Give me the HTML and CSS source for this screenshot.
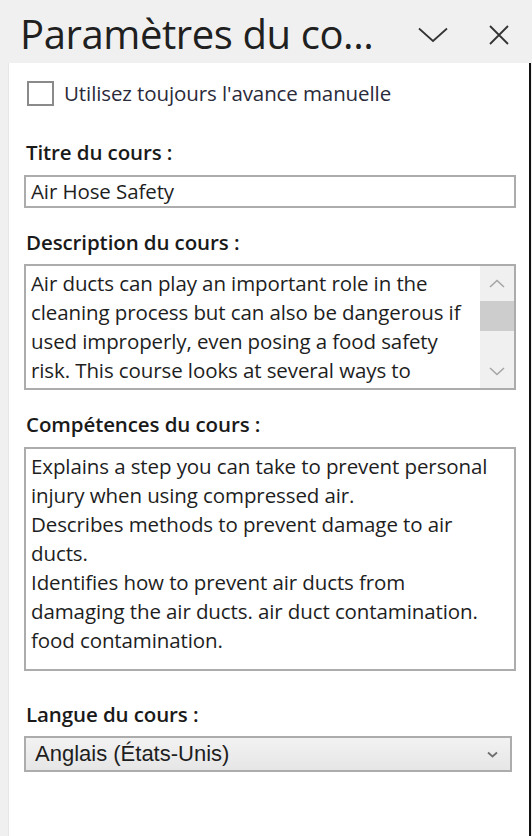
FILE: index.html
```html
<!DOCTYPE html>
<html lang="fr">
<head>
<meta charset="utf-8">
<title>Paramètres du cours</title>
<link rel="stylesheet" href="styles.css">
</head>
<body>
<div class="window">
  <header class="titlebar">
    <h1 class="title">Paramètres du co...</h1>
    <div class="controls">
      <svg class="ctl ctl-chevron" width="30" height="16" viewBox="0 0 30 16"><path d="M1 1.5 L15 14 L29 1.5" fill="none" stroke="#333" stroke-width="1.7"/></svg>
      <svg class="ctl ctl-close" width="20" height="20" viewBox="0 0 20 20"><path d="M1 1 L19 19 M19 1 L1 19" fill="none" stroke="#333" stroke-width="1.8"/></svg>
    </div>
  </header>
  <main class="panel">
    <label class="check-row">
      <span class="checkbox"></span>
      <span class="check-label">Utilisez toujours l'avance manuelle</span>
    </label>

    <div class="field field-title">
      <div class="field-label">Titre du cours :</div>
      <div class="input">Air Hose Safety</div>
    </div>

    <div class="field field-desc">
      <div class="field-label">Description du cours :</div>
      <div class="textarea textarea-desc">
        <div class="textarea-text">Air ducts can play an important role in the cleaning process but can also be dangerous if used improperly, even posing a food safety risk. This course looks at several ways to</div>
        <div class="scrollbar">
          <div class="sb-btn"><svg width="16" height="9" viewBox="0 0 16 9"><path d="M1 8 L8 1.5 L15 8" fill="none" stroke="#a6a6a6" stroke-width="1.6"/></svg></div>
          <div class="sb-thumb"></div>
          <div class="sb-track"></div>
          <div class="sb-btn sb-btn-down"><svg width="16" height="9" viewBox="0 0 16 9"><path d="M1 1 L8 7.5 L15 1" fill="none" stroke="#a6a6a6" stroke-width="1.6"/></svg></div>
        </div>
      </div>
    </div>

    <div class="field field-skills">
      <div class="field-label">Compétences du cours :</div>
      <div class="textarea textarea-skills">
        <div class="textarea-text textarea-text-wide">Explains a step you can take to prevent personal injury when using compressed air.<br>Describes methods to prevent damage to air ducts.<br>Identifies how to prevent air ducts from damaging the air ducts. air duct contamination. food contamination.</div>
      </div>
    </div>

    <div class="field field-lang">
      <div class="field-label">Langue du cours :</div>
      <div class="select">
        <span class="select-value">Anglais (États-Unis)</span>
        <svg class="select-arrow" width="11" height="7" viewBox="0 0 11 7"><path d="M1 1.5 L5.5 5.5 L10 1.5" fill="none" stroke="#707070" stroke-width="1.8"/></svg>
      </div>
    </div>
  </main>
</div>
</body>
</html>
```

FILE: styles.css
```css
* { box-sizing: border-box; }

html, body {
  margin: 0;
  padding: 0;
  height: 100%;
  background: #f0f0f0;
}

body {
  font-family: "Open Sans", "Noto Sans", sans-serif;
  color: #1e1e1e;
  overflow: hidden;
}

.window {
  display: flex;
  flex-direction: column;
  height: 836px;
  width: 532px;
}

.titlebar {
  height: 63px;
  display: flex;
  align-items: center;
  padding-left: 20px;
  flex: none;
}

.title {
  margin: 0;
  font-weight: 400;
  font-size: 40px;
  line-height: 63px;
  color: #202020;
  white-space: nowrap;
  letter-spacing: -0.4px;
  flex: 1;
  padding-top: 3px;
}

.controls {
  display: flex;
  align-items: center;
  padding-right: 23px;
  gap: 41px;
  padding-top: 6px;
}

.ctl-chevron { width: 30px; height: 16px; }
.ctl-close { width: 20px; height: 20px; }

.panel {
  flex: 1;
  margin-left: 8px;
  margin-right: 1px;
  background: #fff;
  border-right: 2px solid #111;
  border-left: 1px solid #e6e6e6;
  padding: 18px 13px 0 15px;
  display: flex;
  flex-direction: column;
}

.check-row {
  display: flex;
  align-items: center;
  gap: 10px;
  margin-left: 3px;
  height: 25px;
}

.checkbox {
  width: 27px;
  height: 25px;
  border: 2px solid #8a8a8a;
  background: #fff;
  flex: none;
}

.check-label {
  font-size: 20.5px;
  line-height: 25px;
  color: #2a2a3a;
  letter-spacing: -0.1px;
}

.field-label {
  font-size: 20.5px;
  font-weight: 600;
  color: #1a1a1a;
  line-height: 28px;
  margin-left: 2px;
  letter-spacing: -0.1px;
}

.field-title { margin-top: 32px; }
.field-desc { margin-top: 20px; }
.field-skills { margin-top: 20px; }
.field-lang { margin-top: 29px; }

.input {
  margin-top: 9px;
  height: 33px;
  border: 2px solid #acacac;
  font-size: 20.5px;
  line-height: 29px;
  padding-left: 5px;
  color: #1e1e1e;
  letter-spacing: -0.1px;
}

.textarea {
  margin-top: 8px;
  border: 2px solid #acacac;
  display: flex;
  font-size: 20.5px;
  line-height: 29px;
  color: #1e1e1e;
  letter-spacing: -0.1px;
}

.textarea-desc { height: 126px; overflow: hidden; }
.textarea-skills { height: 224px; margin-top: 9px; }

.textarea-text {
  flex: 1;
  padding: 3px 4px 0 5px;
}

.textarea-text-wide {
  padding-right: 18px;
}

.scrollbar {
  width: 34px;
  background: #f0f0f0;
  display: flex;
  flex-direction: column;
  flex: none;
}

.sb-btn {
  height: 35px;
  display: flex;
  align-items: center;
  justify-content: center;
  flex: none;
}

.sb-btn-down { height: 33px; }

.sb-thumb {
  height: 30px;
  background: #cdcdcd;
  flex: none;
}

.sb-track { flex: 1; }

.select {
  margin-top: 8px;
  margin-right: 4px;
  height: 36px;
  border: 2px solid #acacac;
  background: linear-gradient(#f2f2f2, #e6e6e6);
  display: flex;
  align-items: center;
  justify-content: space-between;
  padding: 0 12px 0 9px;
}

.select-value {
  font-size: 22px;
  font-family: "Liberation Sans", Arial, sans-serif;
  color: #1e1e1e;
}
```
